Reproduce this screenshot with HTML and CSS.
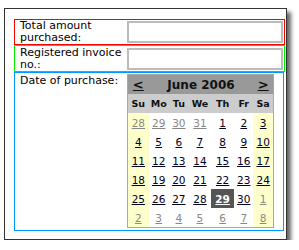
FILE: index.html
```html
<!DOCTYPE html>
<html lang="en">
<head>
    <meta charset="UTF-8">
    <title>Purchase Form</title>
    <link rel="stylesheet" href="styles.css">
</head>
<body>
    <div class="form-box">
        <!-- Amount -->
        <div class="form-row row-red">
            <div class="form-label">Total amount purchased:</div>
            <div class="form-field"><input type="text" class="form-input"></div>
        </div>
        <!-- Invoice -->
        <div class="form-row row-green">
            <div class="form-label">Registered invoice no.:</div>
            <div class="form-field"><input type="text" class="form-input"></div>
        </div>
        <!-- Date -->
        <div class="form-row row-blue">
            <div class="form-label">Date of purchase:</div>
            <div class="form-field">
                <table class="calendar">
                    <colgroup>
                        <col style="width: 21px">
                        <col style="width: 20px">
                        <col style="width: 20px">
                        <col style="width: 22px">
                        <col style="width: 23px">
                        <col style="width: 19px">
                        <col style="width: 20px">
                    </colgroup>
                    <tr class="cal-head">
                        <td class="cal-nav"><a href="#">&lt;</a></td>
                        <td colspan="5" class="cal-title">June 2006</td>
                        <td class="cal-nav"><a href="#">&gt;</a></td>
                    </tr>
                    <tr class="cal-days">
                        <th>Su</th><th>Mo</th><th>Tu</th><th>We</th><th>Th</th><th>Fr</th><th>Sa</th>
                    </tr>
                    <tr>
                        <td class="weekend other"><a href="#">28</a></td>
                        <td class="other"><a href="#">29</a></td>
                        <td class="other"><a href="#">30</a></td>
                        <td class="other"><a href="#">31</a></td>
                        <td><a href="#">1</a></td>
                        <td><a href="#">2</a></td>
                        <td class="weekend"><a href="#">3</a></td>
                    </tr>
                    <tr>
                        <td class="weekend"><a href="#">4</a></td>
                        <td><a href="#">5</a></td>
                        <td><a href="#">6</a></td>
                        <td><a href="#">7</a></td>
                        <td><a href="#">8</a></td>
                        <td><a href="#">9</a></td>
                        <td class="weekend"><a href="#">10</a></td>
                    </tr>
                    <tr>
                        <td class="weekend"><a href="#">11</a></td>
                        <td><a href="#">12</a></td>
                        <td><a href="#">13</a></td>
                        <td><a href="#">14</a></td>
                        <td><a href="#">15</a></td>
                        <td><a href="#">16</a></td>
                        <td class="weekend"><a href="#">17</a></td>
                    </tr>
                    <tr>
                        <td class="weekend"><a href="#">18</a></td>
                        <td><a href="#">19</a></td>
                        <td><a href="#">20</a></td>
                        <td><a href="#">21</a></td>
                        <td><a href="#">22</a></td>
                        <td><a href="#">23</a></td>
                        <td class="weekend"><a href="#">24</a></td>
                    </tr>
                    <tr>
                        <td class="weekend"><a href="#">25</a></td>
                        <td><a href="#">26</a></td>
                        <td><a href="#">27</a></td>
                        <td><a href="#">28</a></td>
                        <td class="selected"><a href="#">29</a></td>
                        <td><a href="#">30</a></td>
                        <td class="weekend other"><a href="#">1</a></td>
                    </tr>
                    <tr>
                        <td class="weekend other"><a href="#">2</a></td>
                        <td class="other"><a href="#">3</a></td>
                        <td class="other"><a href="#">4</a></td>
                        <td class="other"><a href="#">5</a></td>
                        <td class="other"><a href="#">6</a></td>
                        <td class="other"><a href="#">7</a></td>
                        <td class="weekend other"><a href="#">8</a></td>
                    </tr>
                </table>
            </div>
        </div>
    </div>
</body>
</html>
```

FILE: styles.css
```css
body {
    font-family: "DejaVu Sans", Verdana, sans-serif;
    font-size: 11px;
    margin: 0;
    padding: 0;
    background: #fff;
    color: #000;
}
.form-box {
    width: 283px;
    height: 232px;
    box-sizing: border-box;
    margin: 8px 0 0 4px;
    padding: 10px 1px 8px 9px;
    border: 1px solid #333;
    box-shadow: 4px 4px 4px #666;
}
.form-row {
    display: flex;
    width: 271px;
    box-sizing: border-box;
    border: 1px solid;
}
.row-red {
    border-color: #ff0000;
    height: 26px;
    align-items: center;
}
.row-green {
    border-color: #00ee00;
    height: 27px;
    align-items: center;
}
.row-blue {
    border-color: #0099ff;
    height: 159px;
    align-items: flex-start;
    width: 270px;
}
.form-label {
    width: 112px;
    box-sizing: border-box;
    padding-left: 5px;
    line-height: 12px;
}
.row-blue .form-label {
    padding-top: 2px;
}
.form-field {
    flex: 1;
}
.form-input {
    display: block;
    width: 156px;
    height: 22px;
    box-sizing: border-box;
    margin: 0;
    border: 2px solid #bcbcbc;
    padding: 0 3px;
    font: inherit;
}
.calendar {
    margin-top: 1px;
    width: 147px;
    table-layout: fixed;
    border-collapse: collapse;
    border: 1px solid #a8a8a8;
    font-size: 10.5px;
    text-align: center;
}
.calendar td,
.calendar th {
    padding: 0;
    height: 19px;
}
.calendar a {
    color: #000022;
    text-decoration: underline;
}
.cal-head td {
    background: #999;
    font-weight: bold;
    font-size: 12px;
    color: #111;
}
.cal-nav a {
    font-size: 13px;
    color: #111;
}
.cal-days th {
    background: #ccc;
    font-size: 9.5px;
    font-weight: bold;
    color: #111;
}
.weekend {
    background: #ffffcc;
}
.other a {
    color: #888;
}
.calendar .selected {
    background: #555;
}
.selected a {
    color: #fff;
    font-weight: bold;
}
```
